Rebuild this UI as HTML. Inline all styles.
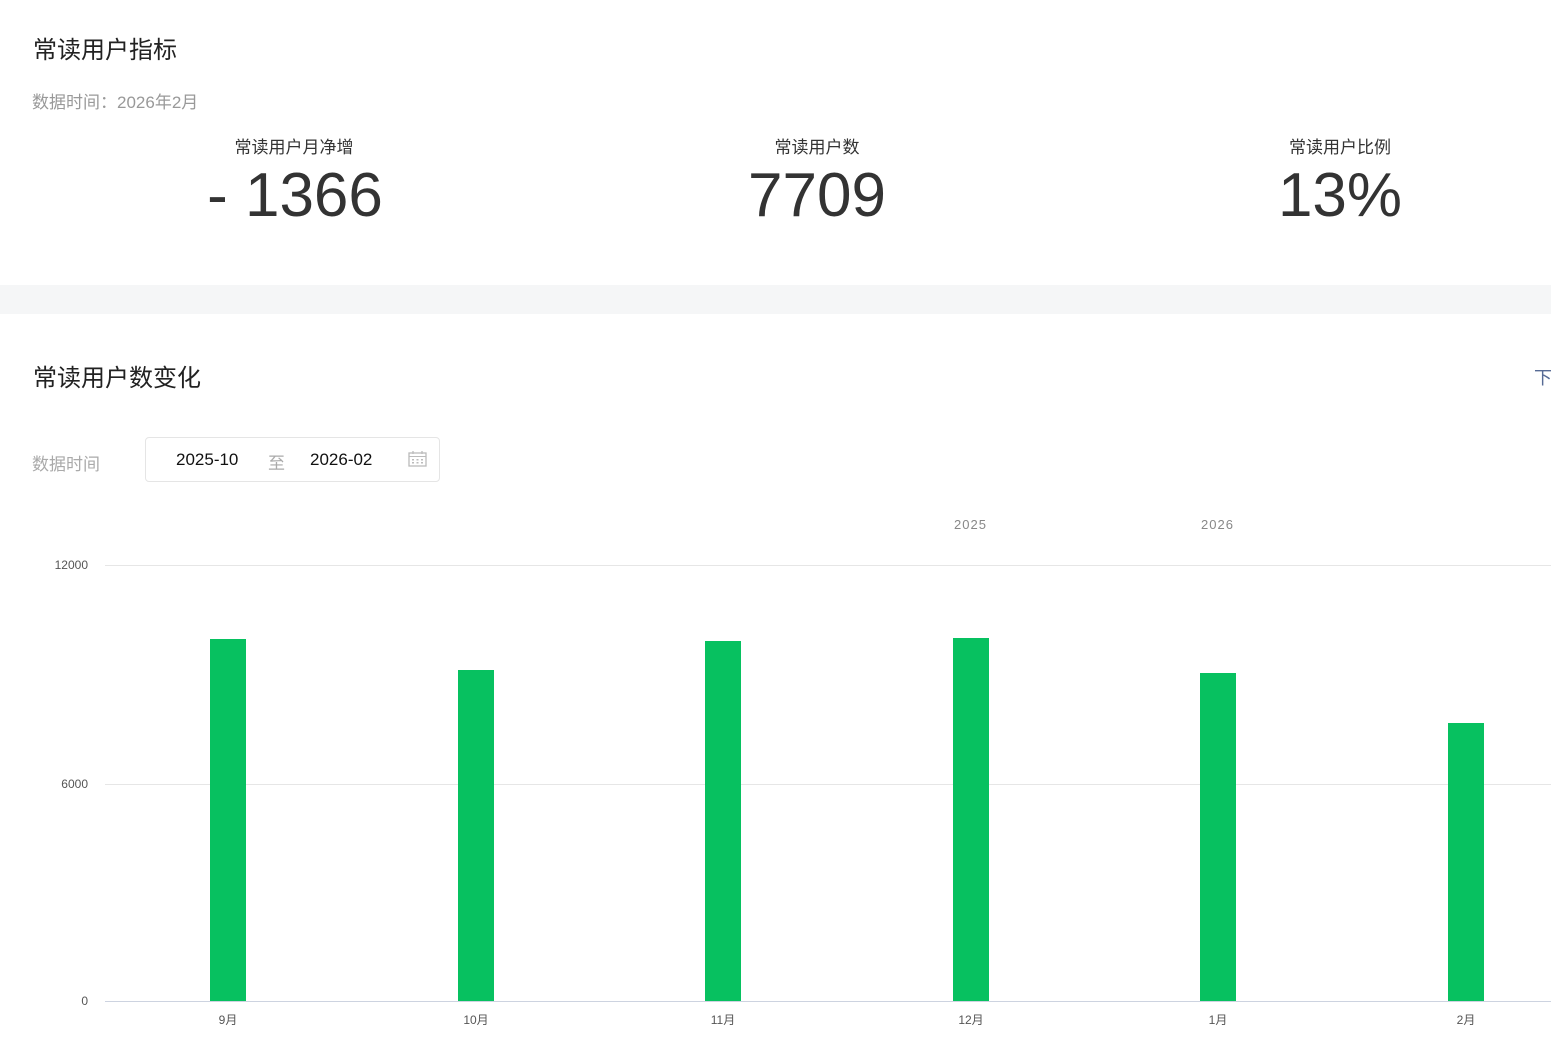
<!DOCTYPE html>
<html><head><meta charset="utf-8"><style>
*{margin:0;padding:0;box-sizing:border-box}
body{width:1551px;height:1056px;background:#fff;position:relative;overflow:hidden;font-family:"Liberation Sans","Noto Sans CJK SC",sans-serif;color:#333}
.a{position:absolute;white-space:nowrap}
.c{text-align:center}
.lbl{font-size:17px;color:#333;width:300px}
.big{font-size:62px;color:#333;width:400px;line-height:1}
.bar{position:absolute;width:36px;background:#07c160;bottom:55px}
.grid{position:absolute;left:105px;right:0;height:1px;background:#e6e6e6}
.yl{position:absolute;font-size:12px;color:#555;width:60px;text-align:right;left:28px}
.xl{position:absolute;font-size:12px;color:#555;width:60px;text-align:center;top:1011px}
</style></head><body>
<div class="a" style="left:33px;top:30px;font-size:24px;color:#222">常读用户指标</div>
<div class="a" style="left:32px;top:88px;font-size:17px;color:#999">数据时间：2026年2月</div>
<div class="a c lbl" style="left:144px;top:133px">常读用户月净增</div>
<div class="a c lbl" style="left:667px;top:133px">常读用户数</div>
<div class="a c lbl" style="left:1190px;top:133px">常读用户比例</div>
<div class="a c big" style="left:95px;top:165px">- 1366</div>
<div class="a c big" style="left:617px;top:165px">7709</div>
<div class="a c big" style="left:1140px;top:165px">13%</div>
<div class="a" style="left:0;top:285px;width:1551px;height:29px;background:#f5f6f7"></div>
<div class="a" style="left:33px;top:358px;font-size:24px;color:#222">常读用户数变化</div>
<div class="a" style="left:1534px;top:364px;font-size:18px;color:#576b95">下</div>
<div class="a" style="left:32px;top:450px;font-size:17px;color:#aaa">数据时间</div>
<div class="a" style="left:145px;top:437px;width:295px;height:45px;border:1px solid #e5e5e5;border-radius:4px"></div>
<div class="a" style="left:176px;top:450px;font-size:17px;color:#111">2025-10</div>
<div class="a" style="left:268px;top:449px;font-size:17px;color:#aaa">至</div>
<div class="a" style="left:310px;top:450px;font-size:17px;color:#111">2026-02</div>
<svg class="a" style="left:408px;top:451px" width="19" height="16" viewBox="0 0 19 16"><rect x="1" y="2" width="17" height="13" fill="none" stroke="#bbb" stroke-width="1.3"/><line x1="1" y1="5.5" x2="18" y2="5.5" stroke="#bbb"/><line x1="5" y1="0" x2="5" y2="3" stroke="#bbb" stroke-width="1.3"/><line x1="14" y1="0" x2="14" y2="3" stroke="#bbb" stroke-width="1.3"/><g fill="#bbb"><rect x="4" y="8" width="2" height="1.5"/><rect x="8.5" y="8" width="2" height="1.5"/><rect x="13" y="8" width="2" height="1.5"/><rect x="4" y="11" width="2" height="1.5"/><rect x="8.5" y="11" width="2" height="1.5"/><rect x="13" y="11" width="2" height="1.5"/></g></svg>
<div class="a" style="left:954px;top:517px;font-size:13px;color:#888;letter-spacing:1px">2025</div>
<div class="a" style="left:1201px;top:517px;font-size:13px;color:#888;letter-spacing:1px">2026</div>
<div class="grid" style="top:565px"></div>
<div class="grid" style="top:784px"></div>
<div class="grid" style="top:1001px;background:#cdd3e0"></div>
<div class="yl" style="top:558px">12000</div>
<div class="yl" style="top:777px">6000</div>
<div class="yl" style="top:994px">0</div>
<div class="bar" style="left:210px;top:639px;height:362px"></div>
<div class="bar" style="left:458px;top:670px;height:331px"></div>
<div class="bar" style="left:705px;top:641px;height:360px"></div>
<div class="bar" style="left:953px;top:638px;height:363px"></div>
<div class="bar" style="left:1200px;top:673px;height:328px"></div>
<div class="bar" style="left:1448px;top:723px;height:278px"></div>
<div class="xl" style="left:198px">9月</div>
<div class="xl" style="left:446px">10月</div>
<div class="xl" style="left:693px">11月</div>
<div class="xl" style="left:941px">12月</div>
<div class="xl" style="left:1188px">1月</div>
<div class="xl" style="left:1436px">2月</div>
</body></html>
